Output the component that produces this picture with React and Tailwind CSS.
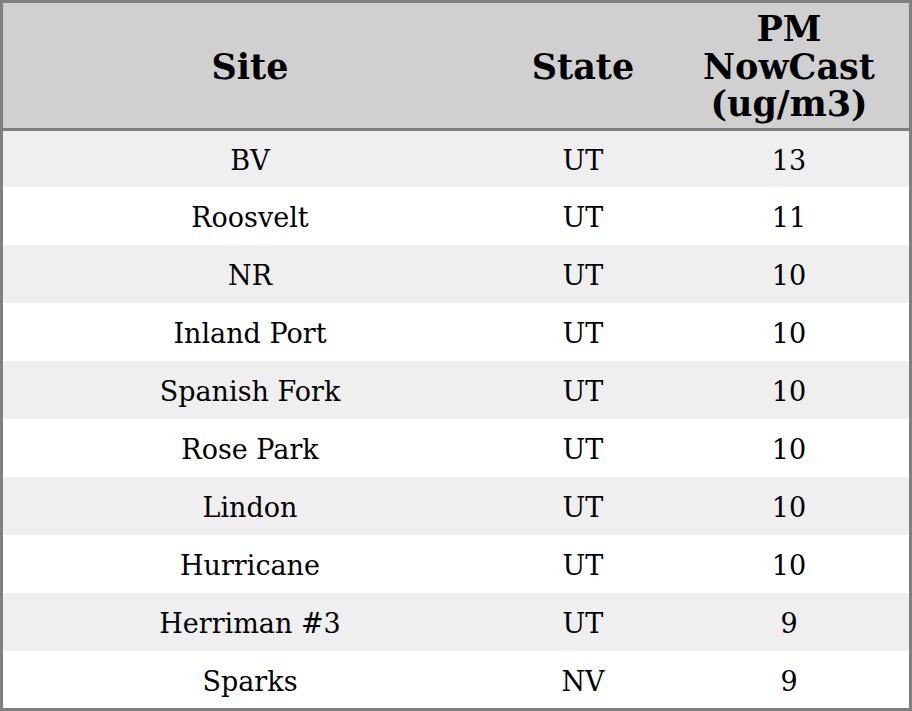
import React from "react";

const rows = [
  { site: "BV", state: "UT", pm: 13 },
  { site: "Roosvelt", state: "UT", pm: 11 },
  { site: "NR", state: "UT", pm: 10 },
  { site: "Inland Port", state: "UT", pm: 10 },
  { site: "Spanish Fork", state: "UT", pm: 10 },
  { site: "Rose Park", state: "UT", pm: 10 },
  { site: "Lindon", state: "UT", pm: 10 },
  { site: "Hurricane", state: "UT", pm: 10 },
  { site: "Herriman #3", state: "UT", pm: 9 },
  { site: "Sparks", state: "NV", pm: 9 },
];

const App = () => {
  return (
    <div
      className="w-[912px] h-[711px] border-[3px] border-[#808080] bg-white text-black flex flex-col"
      style={{ fontFamily: '"DejaVu Serif", serif' }}
    >
      {/* header */}
      <div className="h-[128px] shrink-0 bg-[#d0d0d0] border-b-[3px] border-[#808080] flex items-center pt-[2px] text-[35px] leading-[37.5px] font-bold text-center">
        <div className="w-[494px]">Site</div>
        <div className="w-[172px]">State</div>
        <div className="flex-1">
          PM
          <br />
          NowCast
          <br />
          (ug/m3)
        </div>
      </div>

      {rows.map((r, i) => (
        <div
          key={r.site}
          className={`flex items-center pt-[4px] text-[27px] leading-[32px] text-center ${
            i % 2 === 0 ? "bg-[#efefef]" : "bg-white"
          } ${i === 0 ? "h-[56px]" : i === rows.length - 1 ? "h-[57px]" : "h-[58px]"}`}
        >
          <div className="w-[494px]">{r.site}</div>
          <div className="w-[172px]">{r.state}</div>
          <div className="flex-1">{r.pm}</div>
        </div>
      ))}
    </div>
  );
};

export default App;
